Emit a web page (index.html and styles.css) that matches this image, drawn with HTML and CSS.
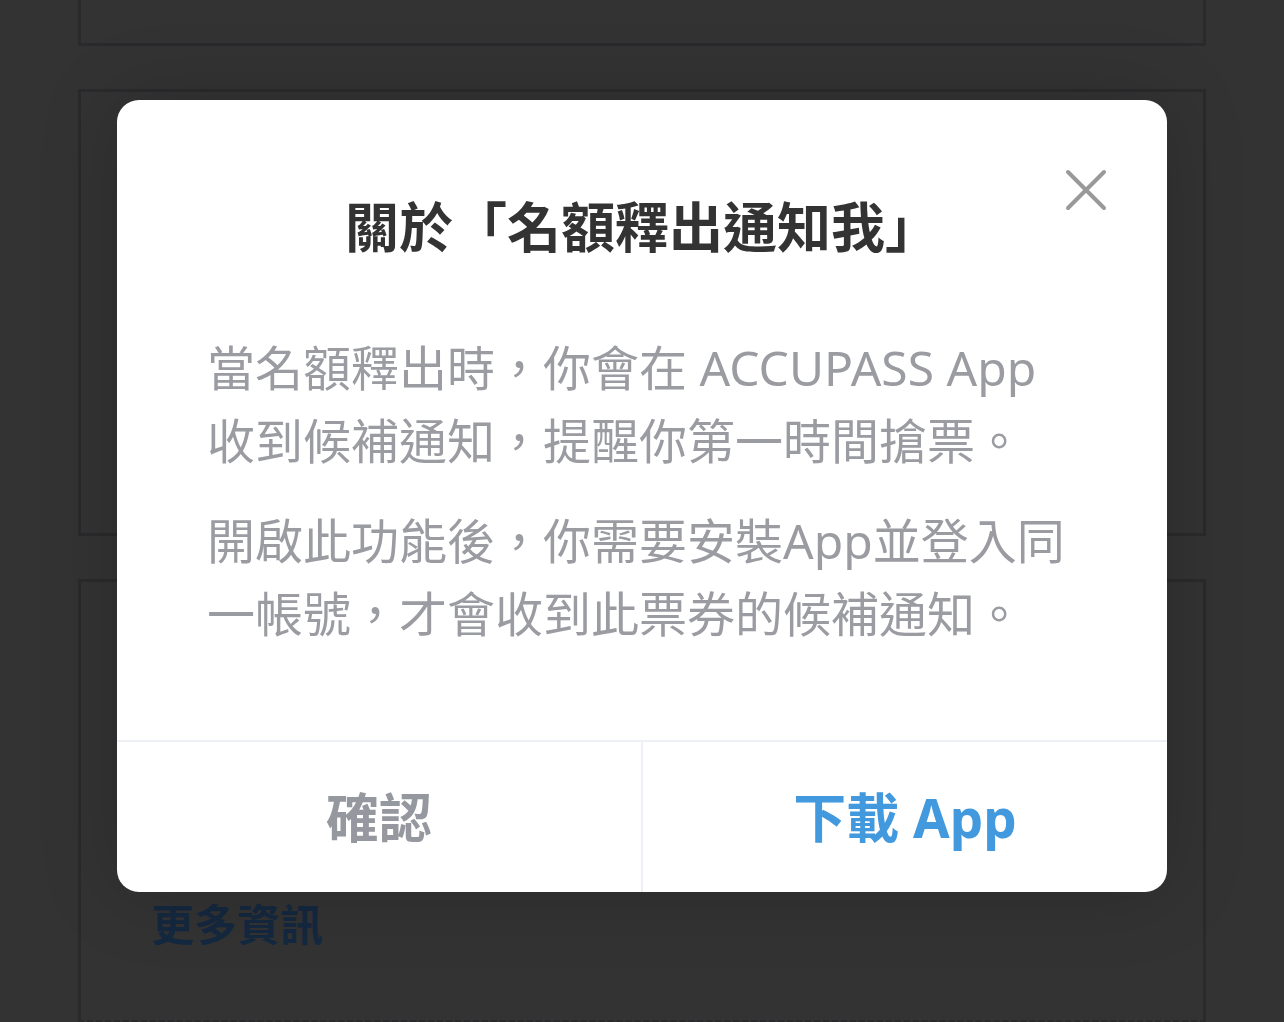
FILE: index.html
```html
<!DOCTYPE html>
<html lang="zh-Hant">
<head>
    <meta charset="UTF-8">
    <meta name="viewport" content="width=device-width, initial-scale=1.0">
    <title>名額釋出通知我</title>
    <link rel="stylesheet" href="styles.css">
</head>
<body>
    <div class="page">
        <div class="card card-tail"></div>
        <div class="card card-main"></div>
        <div class="card card-info">
            <div class="info-title">更多資訊</div>
        </div>
    </div>

    <div class="overlay">
        <div class="modal">
            <button class="modal-close" aria-label="關閉">
                <svg width="42" height="42" viewBox="0 0 42 42">
                    <path d="M3 3 L39 39 M39 3 L3 39" stroke="#999999" stroke-width="4" stroke-linecap="round" fill="none"/>
                </svg>
            </button>
            <div class="modal-body">
                <h2 class="modal-title">關於「名額釋出通知我」</h2>
                <p class="modal-text">當名額釋出時，你會在 ACCUPASS App 收到候補通知，提醒你第一時間搶票。</p>
                <p class="modal-text">開啟此功能後，你需要安裝App並登入同一帳號，才會收到此票券的候補通知。</p>
            </div>
            <div class="modal-footer">
                <button class="modal-btn btn-confirm">確認</button>
                <button class="modal-btn btn-download">下載 App</button>
            </div>
        </div>
    </div>
</body>
</html>
```

FILE: styles.css
```css
:root {
    --page-bg: #333333; --card-border: #2a2a2c; --info-text: #14283f;
    --modal-bg: #ffffff; --title-color: #333333; --text-color: #9a9ca2;
    --divider: #edf1f6; --confirm-color: #95989e; --accent: #4299dd;
}
* { box-sizing: border-box; }
body { margin: 0; background-color: var(--page-bg); font-family: "Noto Sans", "Noto Sans CJK TC", sans-serif; overflow: hidden; }
.page { padding: 0 78px; display: flex; flex-direction: column; gap: 43px; }
.card { border: 3px solid var(--card-border); }
.card-tail { height: 46px; border-top: 0; }
.card-main { height: 447px; }
.card-info { height: 444px; padding: 313px 0 0 70px; border-bottom-style: dashed; }
.info-title { font-size: 43px; font-weight: 700; color: var(--info-text); line-height: 60px; }

.overlay { position: fixed; inset: 0; display: flex; justify-content: center; align-items: flex-start; padding-top: 100px; }
.modal { position: relative; width: 1050px; background: var(--modal-bg); border-radius: 22px; box-shadow: 0 0 80px rgba(0, 0, 0, 0.18); overflow: hidden; }
.modal-close { position: absolute; top: 69px; right: 60px; width: 42px; height: 42px; padding: 0; border: 0; background: none; cursor: pointer; }
.modal-close svg { display: block; }
.modal-body { padding: 91px 90px 90px; }
.modal-title { margin: 0 0 67px; text-align: center; font-size: 54px; line-height: 73px; font-weight: 700; color: var(--title-color); }
.modal-text { margin: 0; font-size: 48px; line-height: 73px; color: var(--text-color); }
.modal-text + .modal-text { margin-top: 27px; }
.modal-footer { display: flex; height: 152px; border-top: 2px solid var(--divider); }
.modal-btn { flex: 1; border: 0; padding: 0 0 4px; background: none; font-family: inherit; font-size: 53px; font-weight: 700; cursor: pointer; }
.btn-confirm { color: var(--confirm-color); }
.btn-download { color: var(--accent); border-left: 2px solid var(--divider); }
```
